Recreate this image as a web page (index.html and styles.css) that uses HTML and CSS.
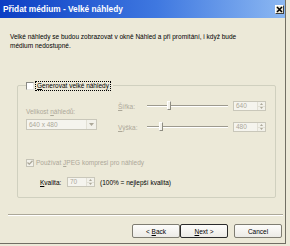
FILE: index.html
```html
<!DOCTYPE html>
<html>
<head>
<meta charset="utf-8">
<link rel="stylesheet" href="styles.css">
</head>
<body>
<div class="window">
  <div class="titlebar">
    <span class="title">Přidat médium - Velké náhledy</span>
    <span class="close"><svg width="7" height="7" viewBox="0 0 7 7"><path d="M1 1 L6 6 M6 1 L1 6" stroke="#000" stroke-width="1.6"/></svg></span>
  </div>
  <div class="content">
    <p class="desc">Velké náhledy se budou zobrazovat v okně Náhled a při promítání, i když bude<br>médium nedostupné.</p>
    <div class="group">
      <div class="legend"><span class="check"></span><span class="focus"><u>G</u>enerovat velké náhledy</span></div>
      <div class="row-a">
        <div class="col-left">
          <div class="lbl dis">Velikost <u>n</u>áhledů:</div>
          <div class="combo"><span class="combo-val">640 x 480</span><span class="combo-btn"><svg width="5" height="3" viewBox="0 0 5 3"><path d="M0 0 H5 L2.5 3 Z" fill="#aca899"/></svg></span></div>
        </div>
        <div class="col-right">
          <span class="lbl dis"><u>Š</u>ířka:</span>
          <div class="slider"><span class="track"></span><span class="thumb" style="left:20px"></span></div>
          <div class="spin"><span class="spin-val">640</span><span class="spin-btns"><span class="sb"><svg width="3" height="2" viewBox="0 0 3 2"><path d="M0 2 H3 L1.5 0 Z" fill="#aca899"/></svg></span><span class="sb"><svg width="3" height="2" viewBox="0 0 3 2"><path d="M0 0 H3 L1.5 2 Z" fill="#aca899"/></svg></span></span></div>
          <span class="lbl dis"><u>V</u>ýška:</span>
          <div class="slider"><span class="track"></span><span class="thumb" style="left:12px"></span></div>
          <div class="spin"><span class="spin-val">480</span><span class="spin-btns"><span class="sb"><svg width="3" height="2" viewBox="0 0 3 2"><path d="M0 2 H3 L1.5 0 Z" fill="#aca899"/></svg></span><span class="sb"><svg width="3" height="2" viewBox="0 0 3 2"><path d="M0 0 H3 L1.5 2 Z" fill="#aca899"/></svg></span></span></div>
        </div>
      </div>
      <div class="jpeg-row"><span class="check checked"><svg width="6" height="5" viewBox="0 0 6 5"><path d="M0.5 2.5 L2.3 4.2 L5.5 0.8" stroke="#aca899" stroke-width="1.3" fill="none"/></svg></span><span class="dis">Používat <u>J</u>PEG kompresi pro náhledy</span></div>
      <div class="quality-row">
        <span class="q-lbl"><u>K</u>valita:</span>
        <div class="spin spin-q"><span class="spin-val">70</span><span class="spin-btns"><span class="sb"><svg width="3" height="2" viewBox="0 0 3 2"><path d="M0 2 H3 L1.5 0 Z" fill="#aca899"/></svg></span><span class="sb"><svg width="3" height="2" viewBox="0 0 3 2"><path d="M0 0 H3 L1.5 2 Z" fill="#aca899"/></svg></span></span></div>
        <span class="q-note">(100% = nejlepší kvalita)</span>
      </div>
    </div>
    <div class="separator"></div>
    <div class="buttons">
      <button class="btn">&lt; <u>B</u>ack</button>
      <button class="btn default"><u>N</u>ext &gt;</button>
      <button class="btn cancel">Cancel</button>
    </div>
  </div>
</div>
</body>
</html>
```

FILE: styles.css
```css
* { box-sizing: border-box; }
html, body { margin: 0; padding: 0; background: #ece9d8; }
body {
  font-family: "Liberation Sans", Arial, sans-serif;
  font-size: 6.5px;
  color: #000;
  width: 290px;
  height: 246px;
  overflow: hidden;
}
u { text-decoration: underline; text-underline-offset: 1px; }
.window {
  width: 286px;
  height: 244px;
  background: #ece9d8;
  border-right: 1px solid #716f64;
  border-bottom: 1px solid #716f64;
}
.titlebar {
  height: 18px;
  background: linear-gradient(90deg, #0b3ec4 0%, #3f78e0 55%, #8cb8f2 100%);
  display: flex;
  align-items: center;
  justify-content: space-between;
  padding: 0 1px 0 3px;
}
.title {
  color: #fff;
  font-weight: bold;
  font-size: 8.3px;
}
.close {
  width: 9px;
  height: 9px;
  background: #ece9d8;
  border: 1px solid;
  border-color: #fff #404040 #404040 #fff;
  display: flex;
  align-items: center;
  justify-content: center;
}
.content { padding: 14px 0 0 10px; }
.desc { margin: 0; line-height: 9px; height: 18px; }
.group {
  position: relative;
  margin: 35px 0 0 7px;
  width: 259px;
  height: 113px;
  border: 1px solid #d0d0bf;
  border-radius: 2px;
  padding: 0 0 0 8px;
}
.legend {
  position: absolute;
  left: 8px;
  top: -5px;
  display: flex;
  align-items: center;
  background: #ece9d8;
  padding-right: 2px;
  gap: 1px;
}
.check {
  width: 8px;
  height: 8px;
  background: #fff;
  border: 1px solid;
  border-color: #8a8a85 #e6e6e0 #e6e6e0 #8a8a85;
  display: inline-flex;
  align-items: center;
  justify-content: center;
}
.check.checked { background: #f2f1ea; border-color: #c5c3b6; }
.focus {
  border: 1px dotted #000;
  padding: 0 1px;
  line-height: 8px;
}
.dis { color: #aca899; }
.row-a { display: flex; margin-top: 14px; }
.col-left { width: 71px; padding-top: 7px; }
.lbl { line-height: 9px; }
.combo {
  margin-top: 3px;
  height: 11px;
  border: 1px solid #c9c7ba;
  background: #f5f4ee;
  display: flex;
  align-items: center;
  justify-content: space-between;
  padding-left: 2px;
}
.combo-val { color: #aca899; }
.combo-btn {
  width: 10px;
  height: 9px;
  background: #f2f1ea;
  border-left: 1px solid #e2e0d5;
  display: flex;
  align-items: center;
  justify-content: center;
}
.col-right {
  margin-left: 21px;
  display: grid;
  grid-template-columns: 29px 81px 33px;
  grid-template-rows: 12px 12px;
  column-gap: 0;
  row-gap: 9px;
  align-items: center;
}
.slider { position: relative; height: 12px; width: 81px; }
.track {
  position: absolute;
  left: 0;
  right: 0;
  top: 5px;
  height: 2px;
  border-top: 1px solid #9d9a8e;
  border-bottom: 1px solid #fff;
}
.thumb {
  position: absolute;
  top: 1px;
  width: 4px;
  height: 9px;
  background: #f2f1ea;
  border: 1px solid;
  border-color: #fff #8f8d82 #8f8d82 #fff;
}
.spin {
  margin-left: 5px;
  width: 33px;
  height: 10px;
  border: 1px solid #c9c7ba;
  background: #f5f4ee;
  display: flex;
  justify-content: space-between;
  padding-left: 2px;
}
.spin-val { color: #aca899; line-height: 8px; }
.spin-btns {
  display: flex;
  flex-direction: column;
  width: 8px;
  border-left: 1px solid #e2e0d5;
}
.sb {
  flex: 1;
  display: flex;
  align-items: center;
  justify-content: center;
  background: #f2f1ea;
  border-bottom: 1px solid #e2e0d5;
}
.sb:last-child { border-bottom: 0; }
.jpeg-row {
  margin-top: 25px;
  height: 9px;
  display: flex;
  align-items: center;
  gap: 2px;
}
.quality-row {
  margin-top: 10px;
  margin-left: 14px;
  height: 10px;
  display: flex;
  align-items: center;
}
.q-lbl { width: 27px; }
.spin-q { margin-left: 0; width: 28px; }
.q-note { margin-left: 5px; }
.separator {
  margin: 16px 0 0 -2px;
  width: 275px;
  height: 2px;
  border-top: 1px solid #aca899;
  border-bottom: 1px solid #fff;
}
.buttons {
  margin-top: 8px;
  display: flex;
  padding-left: 122px;
}
.btn {
  font-family: inherit;
  font-size: 6.5px;
  color: #000;
  width: 48px;
  height: 14px;
  padding: 0;
  background: linear-gradient(#fdfdfb, #ecebe6);
  border: 1px solid #7f7d72;
  border-radius: 2px;
}
.btn.default { border: 1.5px solid #2b2b2b; }
.btn.cancel { margin-left: 6px; }
```
